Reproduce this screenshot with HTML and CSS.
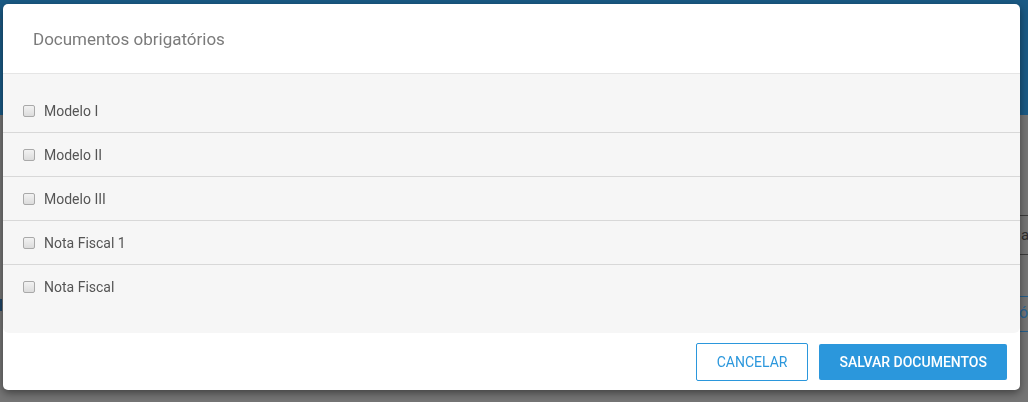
FILE: index.html
```html
<!DOCTYPE html>
<html lang="pt-BR">
<head>
    <meta charset="UTF-8">
    <meta name="viewport" content="width=device-width, initial-scale=1.0">
    <title>Documentos obrigatórios</title>
    <link rel="stylesheet" href="styles.css">
</head>
<body>
    <!-- page behind the backdrop -->
    <div class="page">
        <header class="topbar">
            <span class="topbar-text">t</span>
        </header>
        <div class="page-body">
            <div class="page-left">
                <span class="left-mark"></span>
            </div>
            <div class="page-right">
                <div class="field-row">a</div>
                <div class="link-row">ó</div>
            </div>
        </div>
    </div>

    <div class="modal">
        <div class="modal-header">
            <h2>Documentos obrigatórios</h2>
        </div>
        <div class="modal-body">
            <label class="doc-row"><input type="checkbox"> Modelo I</label>
            <label class="doc-row"><input type="checkbox"> Modelo II</label>
            <label class="doc-row"><input type="checkbox"> Modelo III</label>
            <label class="doc-row"><input type="checkbox"> Nota Fiscal 1</label>
            <label class="doc-row"><input type="checkbox"> Nota Fiscal</label>
        </div>
        <div class="modal-footer">
            <button class="btn btn-outline">Cancelar</button>
            <button class="btn btn-primary">Salvar documentos</button>
        </div>
    </div>
</body>
</html>
```

FILE: styles.css
```css
/* Basic Reset */
* {
    margin: 0;
    padding: 0;
    box-sizing: border-box;
}

body {
    font-family: Roboto, "Liberation Sans", Arial, sans-serif;
    background-color: #757575;
    color: #555;
    height: 402px;
    overflow: hidden;
}

/* page under the backdrop (already dimmed colours) */
.topbar {
    height: 115px;
    background-color: #1a5a85;
    padding: 12px 0 0 0;
}

.topbar-text {
    font-size: 14px;
    color: #3a4f5e;
    margin-left: -3px;
}

.page-body {
    display: grid;
    grid-template-columns: 1fr 8px;
}

.page-left {
    padding-top: 184px;
}

.left-mark {
    display: block;
    width: 2px;
    height: 12px;
    background-color: #1f4566;
}

.page-right {
    padding-top: 100px;
}

.field-row {
    height: 40px;
    line-height: 38px;
    border-top: 1px solid #3d3d3d;
    border-bottom: 1px solid #3d3d3d;
    font-size: 15px;
    color: #2e2e2e;
    padding-left: 1px;
}

.link-row {
    margin-top: 41px;
    height: 36px;
    line-height: 32px;
    border-top: 1px solid #255f8c;
    border-bottom: 1px solid #255f8c;
    font-size: 16px;
    color: #2a6596;
    margin-left: -3px;
    padding-left: 2px;
}

/* modal */
.modal {
    position: fixed;
    top: 4px;
    left: 3px;
    width: 1017px;
    height: 386px;
    background-color: #fff;
    border-radius: 5px;
    box-shadow: 0 3px 9px rgba(0, 0, 0, 0.45);
    display: flex;
    flex-direction: column;
}

.modal-header {
    height: 70px;
    padding: 0 30px;
    border-bottom: 1px solid #e5e5e5;
    display: flex;
    align-items: center;
}

.modal-header h2 {
    font-size: 17px;
    font-weight: 400;
    color: #7b7b7b;
    margin-top: 1px;
}

.modal-body {
    background-color: #f6f6f6;
    border-radius: 0 0 6px 6px;
    padding: 15px 0 25px;
}

.doc-row {
    display: flex;
    align-items: center;
    gap: 9px;
    height: 44px;
    padding-left: 20px;
    border-bottom: 1px solid #d8d8d8;
    font-size: 14px;
    color: #555;
}

.doc-row:last-child {
    border-bottom: none;
    height: 43px;
}

.doc-row input {
    appearance: none;
    width: 12px;
    height: 12px;
    margin: 1px 0 0 0;
    border: 1px solid #a9a9a9;
    border-radius: 2px;
    background: linear-gradient(#f2f2f2, #dcdcdc);
}

.modal-footer {
    flex: 1;
    display: flex;
    justify-content: flex-end;
    align-items: center;
    gap: 11px;
    padding: 0 13px 0 0;
}

.btn {
    font-family: Roboto, "Liberation Sans", Arial, sans-serif;
    font-size: 14px;
    text-transform: uppercase;
    border-radius: 2px;
    cursor: pointer;
}

.btn-outline {
    height: 38px;
    padding: 0 20px;
    background-color: #fff;
    border: 1px solid #2b97dc;
    color: #2b97dc;
}

.btn-primary {
    height: 36px;
    padding: 0 20px;
    background-color: #2b97dc;
    border: none;
    color: #fff;
    font-weight: 500;
}
```
